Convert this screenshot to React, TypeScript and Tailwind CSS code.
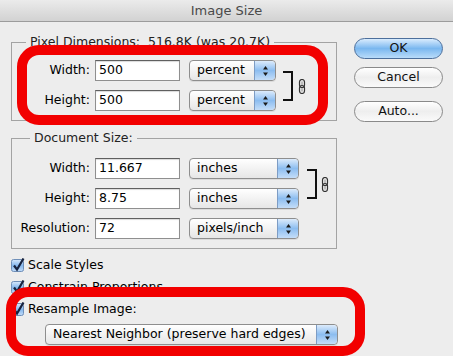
function Stepper() {
  return (
    <div className="w-[21px] h-full flex items-center justify-center border-l border-[#7d9cc4] rounded-r-[4px] bg-gradient-to-b from-[#dcebfb] via-[#8cbdf0] to-[#c4ddf8]">
      <svg width="7" height="12" viewBox="0 0 7 12">
        <path d="M3.5 1 L6 4.5 L1 4.5 Z" fill="#1b1b1b" />
        <path d="M3.5 11 L6 7.5 L1 7.5 Z" fill="#1b1b1b" />
      </svg>
    </div>
  );
}

function Select({ value, width }: { value: string; width: string }) {
  return (
    <div
      className={`${width} h-[21px] flex items-center rounded-[4px] border border-[#8e8e8e] bg-gradient-to-b from-white to-[#e6e6e6] shadow-[0_1px_0_rgba(0,0,0,0.08)]`}
    >
      <span className="flex-1 pl-[7px] whitespace-nowrap">{value}</span>
      <Stepper />
    </div>
  );
}

function Field({ label, value, unit, selectWidth }: { label: string; value: string; unit: string; selectWidth: string }) {
  return (
    <div className="flex items-center h-[21px]">
      <span className="w-[78px] text-right">{label}</span>
      <div className="ml-[5px] w-[85px] h-[21px] flex items-center bg-white border border-[#8f8f8f] border-t-[#5f5f5f] pl-[3px] shadow-[inset_0_1px_1px_rgba(0,0,0,0.15)]">
        {value}
      </div>
      <div className="ml-[9px]">
        <Select value={unit} width={selectWidth} />
      </div>
    </div>
  );
}

function Link() {
  return (
    <svg width="8" height="15" viewBox="0 0 8 15">
      <rect x="1.5" y="0.5" width="5" height="8" rx="2.5" fill="none" stroke="#333" strokeWidth="1.2" />
      <rect x="1.5" y="6.5" width="5" height="8" rx="2.5" fill="none" stroke="#333" strokeWidth="1.2" />
      <path d="M4 2.5 V6 M4 9 V12.5" stroke="#777" strokeWidth="0.8" />
    </svg>
  );
}

function Bracket() {
  return <div className="w-[10px] h-[30px] border-[2px] border-l-0 border-[#111]" />;
}

function Check({ label }: { label: string }) {
  return (
    <div className="flex items-center h-[22px]">
      <svg width="14" height="14" viewBox="0 0 14 14">
        <defs>
          <linearGradient id="cb" x1="0" y1="0" x2="0" y2="1">
            <stop offset="0" stopColor="#d9e9fb" />
            <stop offset="0.5" stopColor="#86b8ee" />
            <stop offset="1" stopColor="#c2dcf8" />
          </linearGradient>
        </defs>
        <rect x="0.5" y="1.5" width="12" height="12" rx="2" fill="url(#cb)" stroke="#6f8fb8" />
        <path d="M3 7.5 L6 11.5 L12.5 0.5" fill="none" stroke="#17233f" strokeWidth="2.2" />
      </svg>
      <span className="ml-[3px]">{label}</span>
    </div>
  );
}

function AquaButton({ label, primary }: { label: string; primary?: boolean }) {
  return (
    <div
      className={
        primary
          ? "w-[89px] h-[21px] flex items-center justify-center rounded-full border border-[#4c6f9c] bg-gradient-to-b from-[#d9ecfd] via-[#7ab7ef] to-[#b9dcfa] text-[#111]"
          : "w-[89px] h-[21px] flex items-center justify-center rounded-full border border-[#8a8a8a] bg-gradient-to-b from-white via-[#eeeeee] to-[#fafafa] text-[#111]"
      }
    >
      {label}
    </div>
  );
}

export default function App() {
  return (
    <div className="relative w-[453px] h-[356px] overflow-hidden bg-[#ededed] font-['DejaVu_Sans',sans-serif] text-[12.5px] text-black">
      <div className="h-[22px] flex items-center justify-center border-b border-[#9c9c9c] bg-gradient-to-b from-[#ebebeb] to-[#d2d2d2] text-[13px] text-[#4a4a4a]">
        Image Size
      </div>

      <div className="flex">
        <div className="w-[337px] pl-[11px]">
          <fieldset className="mt-[12px] w-[326px] border border-[#a3a3a3] pt-[10px] pb-[9px]">
            <legend className="ml-[14px] px-[4px] leading-[16px] text-[#222]">
              Pixel Dimensions:&nbsp;&nbsp;516.8K (was 20.7K)
            </legend>
            <div className="flex items-center">
              <div className="flex flex-col gap-[9px]">
                <Field label="Width:" value="500" unit="percent" selectWidth="w-[87px]" />
                <Field label="Height:" value="500" unit="percent" selectWidth="w-[87px]" />
              </div>
              <div className="ml-[7px]">
                <Bracket />
              </div>
              <div className="ml-[5px] mt-[1px]">
                <Link />
              </div>
            </div>
          </fieldset>

          <fieldset className="mt-[9px] w-[326px] border border-[#a3a3a3] pt-[12px] pb-[9px]">
            <legend className="ml-[18px] px-[4px] leading-[16px] text-[#222]">Document Size:</legend>
            <div className="flex flex-col gap-[9px]">
              <div className="flex items-center">
                <div className="flex flex-col gap-[9px]">
                  <Field label="Width:" value="11.667" unit="inches" selectWidth="w-[110px]" />
                  <Field label="Height:" value="8.75" unit="inches" selectWidth="w-[110px]" />
                </div>
                <div className="ml-[8px]">
                  <Bracket />
                </div>
                <div className="ml-[4px] mt-[1px]">
                  <Link />
                </div>
              </div>
              <Field label="Resolution:" value="72" unit="pixels/inch" selectWidth="w-[110px]" />
            </div>
          </fieldset>

          <div className="mt-[5px] flex flex-col">
            <Check label="Scale Styles" />
            <Check label="Constrain Proportions" />
            <Check label="Resample Image:" />
            <div className="mt-[4px] ml-[34px]">
              <Select value="Nearest Neighbor (preserve hard edges)" width="w-[293px]" />
            </div>
          </div>
        </div>

        <div className="ml-[17px] mt-[16px] flex flex-col">
          <AquaButton label="OK" primary />
          <div className="mt-[8px]">
            <AquaButton label="Cancel" />
          </div>
          <div className="mt-[13px]">
            <AquaButton label="Auto..." />
          </div>
        </div>
      </div>

      <div className="absolute left-[17px] top-[45px] w-[311px] h-[80px] rounded-[22px] border-[10px] border-[#f20000]" />
      <div className="absolute left-[6px] top-[287px] w-[359px] h-[69px] rounded-[22px] border-[10px] border-[#f20000]" />
    </div>
  );
}
